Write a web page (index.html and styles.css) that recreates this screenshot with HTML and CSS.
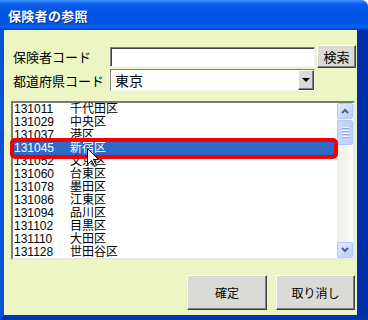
FILE: index.html
```html
<!DOCTYPE html>
<html lang="ja">
<head>
    <meta charset="UTF-8">
    <title>保険者の参照</title>
    <link rel="stylesheet" href="styles.css">
</head>
<body>
    <div class="window">
        <div class="titlebar"><span class="title">保険者の参照</span></div>
        <div class="client">
            <div class="form">
                <span class="label">保険者コード</span>
                <div class="textbox"></div>
                <button class="btn search-btn">検索</button>
                <span class="label">都道府県コード</span>
                <div class="combo">
                    <span class="combo-value">東京</span>
                    <span class="combo-arrow"><span class="tri"></span></span>
                </div>
            </div>

            <div class="listbox">
                <div class="rows">
                    <div class="row"><span class="code">131011</span><span>千代田区</span></div>
                    <div class="row"><span class="code">131029</span><span>中央区</span></div>
                    <div class="row"><span class="code">131037</span><span>港区</span></div>
                    <div class="row selected"><span class="code">131045</span><span>新宿区</span></div>
                    <div class="row"><span class="code">131052</span><span>文京区</span></div>
                    <div class="row"><span class="code">131060</span><span>台東区</span></div>
                    <div class="row"><span class="code">131078</span><span>墨田区</span></div>
                    <div class="row"><span class="code">131086</span><span>江東区</span></div>
                    <div class="row"><span class="code">131094</span><span>品川区</span></div>
                    <div class="row"><span class="code">131102</span><span>目黒区</span></div>
                    <div class="row"><span class="code">131110</span><span>大田区</span></div>
                    <div class="row"><span class="code">131128</span><span>世田谷区</span></div>
                    <!-- 赤枠の注釈とマウスカーソル -->
                    <div class="mark"></div>
                    <svg class="cursor" width="13" height="20" viewBox="0 0 13 20">
                        <polygon points="0.5,0.5 0.5,16.5 4.5,12.5 7.5,18.5 9.5,17.5 6.5,11.5 11.5,11.5" fill="#fff" stroke="#000" stroke-width="1"/>
                    </svg>
                </div>
                <div class="scrollbar">
                    <div class="sb-btn">
                        <svg width="8" height="6" viewBox="0 0 8 6"><polyline points="1,5 4,2 7,5" fill="none" stroke="#4d6185" stroke-width="2"/></svg>
                    </div>
                    <div class="sb-thumb">
                        <span></span><span></span><span></span><span></span>
                    </div>
                    <div class="sb-track"></div>
                    <div class="sb-btn">
                        <svg width="8" height="6" viewBox="0 0 8 6"><polyline points="1,1 4,4 7,1" fill="none" stroke="#4d6185" stroke-width="2"/></svg>
                    </div>
                </div>
            </div>

            <div class="actions">
                <button class="btn action-btn">確定</button>
                <button class="btn action-btn cancel-btn">取り消し</button>
            </div>
        </div>
    </div>
</body>
</html>
```

FILE: styles.css
```css
body, html {
    margin: 0;
    padding: 0;
    background: #fff;
}

.window {
    width: 368px;
    height: 320px;
    display: flex;
    flex-direction: column;
    background: #0a4fd8;
    border-top-right-radius: 7px;
    overflow: hidden;
    font-family: "Liberation Sans", "Noto Sans CJK JP", sans-serif;
    color: #000;
}

.titlebar {
    flex: none;
    height: 30px;
    display: flex;
    align-items: center;
    padding-left: 8px;
    background: linear-gradient(#3d95ff 0, #0a5ce8 4px, #0054e3 12px, #0056e6 24px, #0b62ee 27px, #0041c8 30px);
}

.title {
    color: #fff;
    font-weight: bold;
    font-size: 13px;
    letter-spacing: 0.3px;
    text-shadow: 1px 1px #0a2a90;
}

.client {
    flex: 1;
    display: flex;
    flex-direction: column;
    background: #ecf6c4;
    border-left: 4px solid #0850d8;
    border-right: 11px solid #0030a8;
    border-bottom: 5px solid #0034b0;
}

/* 上部の入力欄 */
.form {
    display: grid;
    grid-template-columns: 95px 205px 39px;
    grid-template-rows: 23px 22px;
    column-gap: 2px;
    row-gap: 1px;
    align-items: center;
    padding: 15px 0 0 9px;
}

.label {
    font-size: 13px;
    white-space: nowrap;
}

.textbox {
    height: 20px;
    box-sizing: border-box;
    background: #fff;
    border: 1px solid;
    border-color: #808080 #f4f4f4 #f4f4f4 #808080;
    box-shadow: inset 1px 1px #404040;
}

.btn {
    font-family: "Liberation Sans", "Noto Sans CJK JP", sans-serif;
    font-size: 12px;
    color: #000;
    padding: 0;
    background: #dadad6;
    border: 1px solid;
    border-color: #fff #404040 #404040 #fff;
    box-shadow: inset -1px -1px #808080;
}

.search-btn {
    width: 39px;
    height: 23px;
    font-size: 13px;
}

.combo {
    grid-column: 2;
    height: 22px;
    box-sizing: border-box;
    display: flex;
    align-items: center;
    justify-content: space-between;
    background: #fff;
    border: 1px solid;
    border-color: #808080 #f4f4f4 #f4f4f4 #808080;
}

.combo-value {
    font-size: 14px;
    padding-left: 4px;
}

.combo-arrow {
    width: 16px;
    height: 20px;
    box-sizing: border-box;
    display: flex;
    align-items: center;
    justify-content: center;
    background: #dadad6;
    border: 1px solid;
    border-color: #fff #404040 #404040 #fff;
    box-shadow: inset -1px -1px #808080;
}

.tri {
    width: 0;
    height: 0;
    border-left: 4px solid transparent;
    border-right: 4px solid transparent;
    border-top: 4px solid #000;
}

/* 一覧 */
.listbox {
    height: 159px;
    box-sizing: border-box;
    margin: 10px 2px 0 7px;
    display: flex;
    background: #fff;
    border: 2px solid;
    border-color: #7a7a7a #e8e8e8 #e8e8e8 #7a7a7a;
}

.rows {
    flex: 1;
    position: relative;
}

.row {
    display: flex;
    height: 13px;
    line-height: 13px;
    font-size: 12px;
    padding-left: 1px;
    white-space: nowrap;
}

.code {
    width: 56px;
}

.row.selected {
    background: #316ac5;
    color: #fff;
}

.mark {
    position: absolute;
    top: 35px;
    left: -3px;
    width: 328px;
    height: 21px;
    box-sizing: border-box;
    border: 4px solid #f00000;
    border-radius: 5px;
}

.cursor {
    position: absolute;
    top: 45px;
    left: 74px;
}

.scrollbar {
    width: 16px;
    display: flex;
    flex-direction: column;
    background: linear-gradient(90deg, #eeede5, #fbfbf8);
}

.sb-btn {
    height: 16px;
    box-sizing: border-box;
    display: flex;
    align-items: center;
    justify-content: center;
    background: linear-gradient(135deg, #e3ebfe, #b9ccf8);
    border: 1px solid #b4c8f6;
    border-radius: 2px;
}

.sb-thumb {
    height: 25px;
    margin-top: 1px;
    box-sizing: border-box;
    display: flex;
    flex-direction: column;
    align-items: center;
    justify-content: center;
    gap: 1px;
    background: linear-gradient(90deg, #c9d8fc, #bdd0fa);
    border: 1px solid #b4c8f6;
    border-radius: 2px;
}

.sb-thumb span {
    width: 7px;
    height: 1px;
    background: #eef3fe;
    border-bottom: 1px solid #8caaf0;
}

.sb-track {
    flex: 1;
}

/* 下部のボタン */
.actions {
    display: flex;
    justify-content: flex-end;
    gap: 9px;
    margin: 15px 2px 0 0;
}

.action-btn {
    width: 80px;
    height: 35px;
}

.cancel-btn {
    width: 79px;
}
```
